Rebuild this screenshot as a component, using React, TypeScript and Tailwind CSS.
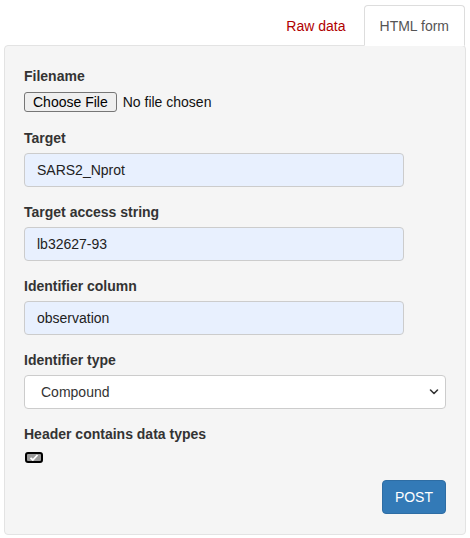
import React from "react";

const labelCls = "block text-[14px] leading-5 font-bold text-[#333] mb-[5px]";
const inputCls =
  "block w-[380px] h-[34px] px-3 text-[14px] text-[#222] bg-[#e8f0fe] border border-[#ccc] rounded-[4px] outline-none";

function Field({ label, value }: { label: string; value: string }) {
  return (
    <div className="mb-[15px]">
      <label className={labelCls}>{label}</label>
      <input className={inputCls} defaultValue={value} />
    </div>
  );
}

export default function App() {
  return (
    <div className="w-[470px] h-[538px] bg-white px-[4px] pt-[5px] text-[14px] text-[#333]" style={{ fontFamily: '"Liberation Sans", Arial, sans-serif' }}>
      {/* Tabs */}
      <div className="flex justify-end relative z-10">
        <div className="h-[41px] px-[15px] py-[10px] leading-5 mr-[2px] text-[#b00000] border border-transparent">
          Raw data
        </div>
        <div className="h-[41px] px-[15px] py-[10px] leading-5 mr-px bg-white border border-[#ddd] border-b-white rounded-t-[4px] text-[#555]">
          HTML form
        </div>
      </div>

      {/* Panel */}
      <div className="-mt-px bg-[#f5f5f5] border border-[#e3e3e3] rounded-[4px] px-[19px] pt-[20px] pb-[20px]">
        <div className="mb-[15px]">
          <label className={labelCls}>Filename</label>
          <div className="flex items-center h-[22px]">
            <span className="h-[20px] px-[8px] flex items-center text-[14px] text-black bg-[#efefef] border border-[#767676] rounded-[3px]">
              Choose File
            </span>
            <span className="ml-[6px] text-[14px] text-[#111]">No file chosen</span>
          </div>
        </div>

        <Field label="Target" value="SARS2_Nprot" />
        <Field label="Target access string" value="lb32627-93" />
        <Field label="Identifier column" value="observation" />

        <div className="mb-[15px]">
          <label className={labelCls}>Identifier type</label>
          <div className="relative">
            <select className="block w-full h-[34px] pl-[16px] pr-8 text-[14px] text-[#333] bg-white border border-[#ccc] rounded-[4px] appearance-none outline-none">
              <option>Compound</option>
            </select>
            <svg className="absolute right-[7px] top-[13px] pointer-events-none" width="10" height="8" viewBox="0 0 10 8">
              <path d="M1.5 2 L5 5.5 L8.5 2" fill="none" stroke="#333" strokeWidth="1.6" strokeLinecap="round" strokeLinejoin="round" />
            </svg>
          </div>
        </div>

        <div className="mb-[15px]">
          <label className={labelCls}>Header contains data types</label>
          <div className="h-[16px] flex items-center pl-px">
            <span className="w-[18px] h-[11px] border-2 border-black rounded-[3px] bg-[#9a9a9a] flex items-center justify-center">
              <svg width="10" height="7" viewBox="0 0 10 7">
                <path d="M1.5 3.8 L3.8 6 L8.5 1" fill="none" stroke="#fff" strokeWidth="1.8" />
              </svg>
            </span>
          </div>
        </div>

        <div className="flex justify-end">
          <button className="h-[34px] px-3 text-[14px] text-white bg-[#337ab7] border border-[#2e6da4] rounded-[4px]">
            POST
          </button>
        </div>
      </div>
    </div>
  );
}
